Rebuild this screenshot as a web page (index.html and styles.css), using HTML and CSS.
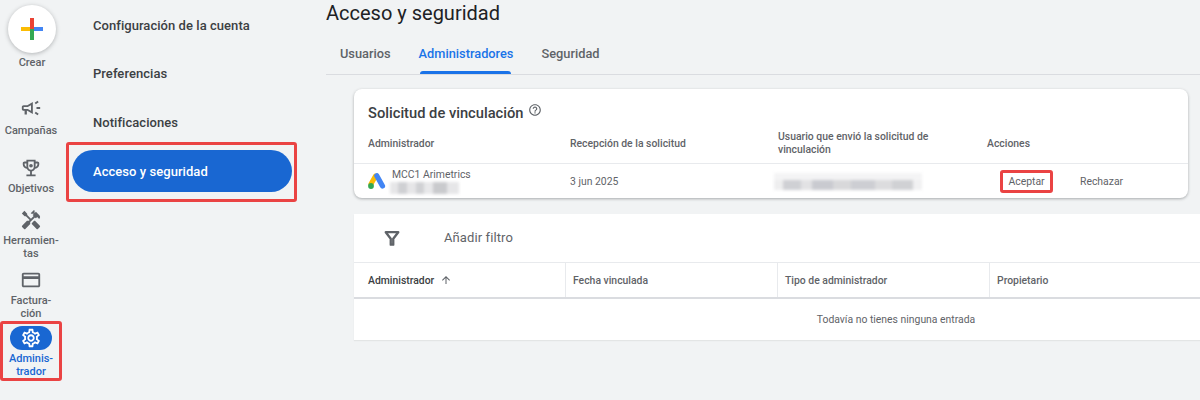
FILE: index.html
```html
<!DOCTYPE html>
<html lang="es">
<head>
<meta charset="utf-8">
<title>Acceso y seguridad</title>
<link rel="stylesheet" href="styles.css">
</head>
<body>
<div class="app">
  <nav class="rail">
    <div class="create">
      <div class="create-btn">
        <svg width="24" height="24" viewBox="0 0 24 24">
          <rect x="1" y="10" width="11" height="4" fill="#fbbc04"/>
          <rect x="12" y="10" width="11" height="4" fill="#4285f4"/>
          <rect x="10" y="1" width="4" height="11" fill="#ea4335"/>
          <rect x="10" y="12" width="4" height="11" fill="#34a853"/>
        </svg>
      </div>
      <span class="rail-label">Crear</span>
    </div>
    <div class="rail-item rail-campaigns">
      <svg class="rail-icon" width="22" height="22" viewBox="0 0 24 24" fill="#5f6368"><path fill-rule="evenodd" d="M18 11v2h4v-2h-4zm-2 6.610c.96.71 2.210 1.650 3.200 2.390.4-.53.8-1.070 1.200-1.600-.99-.74-2.240-1.680-3.200-2.400-.4.54-.8 1.080-1.200 1.610zM20.400 5.600c-.4-.53-.8-1.070-1.200-1.600-.99.74-2.240 1.680-3.200 2.400.4.53.8 1.070 1.200 1.600.96-.72 2.210-1.650 3.200-2.400zM4 9c-1.100 0-2 .9-2 2v2c0 1.100.9 2 2 2h1v4h2.500v-4H8l6 3.500V5.500L8 9H4zm0 2h4.500L12 9v6l-3.500-2H4v-2z"/></svg>
      <span class="rail-label">Campañas</span>
    </div>
    <div class="rail-item rail-goals">
      <svg class="rail-icon" width="22" height="22" viewBox="0 0 24 24" fill="#5f6368"><path d="M19 5h-2V3H7v2H5c-1.100 0-2 .9-2 2v1c0 2.550 1.920 4.630 4.390 4.940A5.010 5.010 0 0 0 11 15.900V19H7v2h10v-2h-4v-3.100a5.010 5.010 0 0 0 3.610-2.960C19.080 12.630 21 10.550 21 8V7c0-1.100-.9-2-2-2zM5 8V7h2v3.820C5.840 10.400 5 9.300 5 8zm12 2.820V7h2v1c0 1.300-.84 2.400-2 2.820zM15 11c0 1.650-1.350 3-3 3s-3-1.350-3-3V5h6v6z"/><circle cx="12" cy="9.500" r="2"/></svg>
      <span class="rail-label">Objetivos</span>
    </div>
    <div class="rail-item rail-tools">
      <svg class="rail-icon" width="22" height="22" viewBox="0 0 24 24" fill="#5f6368"><path d="m21.670 18.170-5.300-5.300h-.99l-2.540 2.540v.99l5.300 5.300c.39.39 1.020.39 1.410 0l2.120-2.120c.39-.38.39-1.020 0-1.410z"/><path d="m17.340 10.190 1.410-1.410 2.120 2.120a3 3 0 0 0 0-4.240l-3.540-3.540-1.410 1.410V1.710l-.7-.71-3.540 3.540.71.71h2.830l-1.410 1.410 1.060 1.060-2.890 2.890-4.130-4.130V5.060L4.830 2.040 2 4.870 5.030 7.900h1.410l4.130 4.130-.85.85H7.600l-5.300 5.300c-.39.39-.39 1.020 0 1.410l2.120 2.120c.39.39 1.020.39 1.410 0l5.300-5.300v-2.120l5.150-5.150 1.060 1.050z"/></svg>
      <span class="rail-label">Herramien-<br>tas</span>
    </div>
    <div class="rail-item rail-billing">
      <svg class="rail-icon" width="22" height="22" viewBox="0 0 24 24" fill="#5f6368"><path fill-rule="evenodd" d="M4 4h16c1.110 0 2 .89 2 2v12c0 1.110-.89 2-2 2H4c-1.110 0-2-.89-2-2V6c0-1.110.89-2 2-2zm0 2v2h16V6H4zm0 5v7h16v-7H4z"/></svg>
      <span class="rail-label">Factura-<br>ción</span>
    </div>
    <div class="rail-item rail-admin">
      <span class="admin-pill">
        <svg width="22" height="22" viewBox="0 0 24 24" fill="#fff"><path d="M19.430 12.980c.04-.32.07-.64.07-.98s-.03-.66-.07-.98l2.110-1.650c.19-.15.24-.42.12-.64l-2-3.460a.5.5 0 0 0-.61-.22l-2.490 1a7.300 7.300 0 0 0-1.690-.98l-.38-2.650A.49.49 0 0 0 14 2h-4c-.25 0-.46.18-.49.42l-.38 2.650c-.61.25-1.170.59-1.690.98l-2.490-1a.5.5 0 0 0-.61.22l-2 3.460c-.13.22-.07.49.12.64l2.110 1.650c-.04.32-.07.65-.07.98s.03.66.07.98l-2.110 1.650c-.19.15-.24.42-.12.64l2 3.460c.12.22.39.3.61.22l2.490-1c.52.4 1.080.73 1.690.98l.38 2.650c.03.24.24.42.49.42h4c.25 0 .46-.18.49-.42l.38-2.650c.61-.25 1.170-.59 1.690-.98l2.490 1c.23.09.49 0 .61-.22l2-3.460c.12-.22.07-.49-.12-.64l-2.110-1.650zm-1.980-1.710c.04.31.05.52.05.73s-.02.43-.05.73l-.14 1.130.89.7 1.080.84-.7 1.210-1.270-.51-1.040-.42-.9.68c-.43.32-.84.56-1.250.73l-1.060.43-.16 1.130-.2 1.350h-1.400l-.19-1.350-.16-1.130-1.060-.43c-.43-.18-.83-.41-1.230-.71l-.91-.7-1.060.43-1.270.51-.7-1.210 1.080-.84.89-.7-.14-1.130c-.03-.31-.05-.54-.05-.74s.02-.43.05-.73l.14-1.130-.89-.7-1.080-.84.7-1.210 1.270.51 1.040.42.9-.68c.43-.32.84-.56 1.250-.73l1.060-.43.16-1.130.2-1.350h1.390l.19 1.350.16 1.130 1.060.43c.43.18.83.41 1.230.71l.91.7 1.060-.43 1.270-.51.7 1.210-1.070.85-.89.7.14 1.130zM12 8c-2.210 0-4 1.790-4 4s1.790 4 4 4 4-1.790 4-4-1.790-4-4-4zm0 6c-1.100 0-2-.9-2-2s.9-2 2-2 2 .9 2 2-.9 2-2 2z"/></svg>
      </span>
      <span class="rail-label rail-label-active">Adminis-<br>trador</span>
    </div>
  </nav>

  <aside class="subnav">
    <div class="subnav-item">Configuración de la cuenta</div>
    <div class="subnav-item">Preferencias</div>
    <div class="subnav-item">Notificaciones</div>
    <div class="subnav-mark">
      <div class="subnav-active">Acceso y seguridad</div>
    </div>
  </aside>

  <main class="main">
    <h1 class="title">Acceso y seguridad</h1>
    <div class="tabs">
      <span class="tab">Usuarios</span>
      <span class="tab tab-active">Administradores</span>
      <span class="tab">Seguridad</span>
    </div>

    <section class="card request">
      <div class="request-title">
        <h2>Solicitud de vinculación</h2>
        <svg width="14" height="14" viewBox="0 0 24 24" fill="#5f6368"><path d="M11 18h2v-2h-2v2zm1-16C6.480 2 2 6.480 2 12s4.480 10 10 10 10-4.480 10-10S17.520 2 12 2zm0 18c-4.410 0-8-3.590-8-8s3.590-8 8-8 8 3.590 8 8-3.590 8-8 8zm0-14c-2.210 0-4 1.790-4 4h2c0-1.100.9-2 2-2s2 .9 2 2c0 2-3 1.750-3 5h2c0-2.250 3-2.500 3-5 0-2.210-1.790-4-4-4z"/></svg>
      </div>
      <div class="request-head">
        <span>Administrador</span>
        <span>Recepción de la solicitud</span>
        <span class="head-user">Usuario que envió la solicitud de vinculación</span>
        <span>Acciones</span>
      </div>
      <div class="request-row">
        <div class="account">
          <svg class="ads-logo" width="18" height="16" viewBox="0 0 18 16">
            <path d="M7.500 3 3 11" stroke="#fbbc04" stroke-width="5" stroke-linecap="round"/>
            <circle cx="3" cy="13" r="2.900" fill="#34a853"/>
            <path d="M8.800 2.700 14.500 13" stroke="#4285f4" stroke-width="5.200" stroke-linecap="round"/>
          </svg>
          <div class="account-text">
            <span>MCC1 Arimetrics</span>
            <span class="blur-id"></span>
          </div>
        </div>
        <span>3 jun 2025</span>
        <span class="blur-user"></span>
        <div class="actions">
          <span class="accept">Aceptar</span>
          <span class="reject">Rechazar</span>
        </div>
      </div>
    </section>

    <section class="card table">
      <div class="filter">
        <svg width="20" height="20" viewBox="0 0 24 24" fill="none" stroke="#5f6368" stroke-width="2.800" stroke-linejoin="round"><path d="M4.500 5h15L13.500 12.800V20h-3v-7.200z"/></svg>
        <span>Añadir filtro</span>
      </div>
      <div class="thead">
        <div class="th th-sort">Administrador
          <svg width="12" height="12" viewBox="0 0 24 24" fill="#5f6368"><path d="M4 12l1.410 1.410L11 7.830V20h2V7.830l5.580 5.590L20 12l-8-8z"/></svg>
        </div>
        <div class="th">Fecha vinculada</div>
        <div class="th">Tipo de administrador</div>
        <div class="th">Propietario</div>
        <div class="th"></div>
      </div>
      <div class="empty">Todavía no tienes ninguna entrada</div>
    </section>
  </main>
</div>
</body>
</html>
```
FILE: styles.css
```css
* { box-sizing: border-box; }
html, body { margin: 0; height: 400px; overflow: hidden; }
body {
  background: #f1f3f4;
  color: #3c4043;
  font-family: Roboto, "Liberation Sans", sans-serif;
}
.app { display: flex; height: 400px; }

/* rail */
.rail { width: 62px; flex: none; display: flex; flex-direction: column; align-items: center; }
.rail-label { font-size: 11px; font-weight: 500; line-height: 13px; color: #5f6368; text-align: center; white-space: nowrap; }
.create { display: flex; flex-direction: column; align-items: center; padding: 5px 0 0 2px; height: 97px; }
.create-btn { width: 48px; height: 48px; border-radius: 50%; background: #fff; box-shadow: 0 1px 4px rgba(60,64,67,.35); display: flex; align-items: center; justify-content: center; margin-bottom: 3px; }
.rail-item { display: flex; flex-direction: column; align-items: center; }
.rail-icon { margin-bottom: 3px; }
.rail-campaigns { height: 60px; }
.rail-campaigns .rail-icon { margin-bottom: 5px; }
.rail-goals { height: 52px; }
.rail-tools { height: 59.500px; }
.rail-billing { height: 52.500px; }
.rail-admin { width: 62px; height: 60px; border: 3px solid #ea4343; border-radius: 3px; padding-top: 2px; }
.admin-pill { width: 42px; height: 25px; border-radius: 12.500px; background: #1967d2; display: flex; align-items: center; justify-content: center; margin-bottom: 2px; }
.rail-label-active { color: #1967d2; }

/* sub navigation */
.subnav { width: 264px; flex: none; padding: 1px 0 0 4px; display: flex; flex-direction: column; }
.subnav-item { height: 48.500px; display: flex; align-items: center; padding-left: 27px; font-size: 13px; font-weight: 500; color: #3c4043; letter-spacing: .05px; white-space: nowrap; }
.subnav-mark { width: 231px; height: 60px; border: 3px solid #ea4343; border-radius: 3px; padding: 5px 2px 0 3px; margin-top: -4.500px; }
.subnav-active { height: 42px; border-radius: 21px; background: #1967d2; color: #fff; font-size: 13px; font-weight: 500; letter-spacing: .05px; display: flex; align-items: center; padding-left: 21px; }

/* main */
.main { flex: 1; min-width: 0; overflow: hidden; }
.title { margin: 0; font-size: 20px; font-weight: 400; line-height: 26px; color: #202124; }
.tabs { display: flex; height: 49px; border-bottom: 1px solid #dadce0; padding: 0 0 0 14px; gap: 28px; align-items: stretch; }
.tab { font-size: 12.800px; font-weight: 500; color: #5f6368; display: flex; align-items: center; padding-top: 6px; }
.tab-active { color: #1a73e8; position: relative; }
.tab-active::after { content: ""; position: absolute; left: 1px; right: 2px; bottom: 0; height: 3px; border-radius: 3px 3px 0 0; background: #1a73e8; }
.card { margin-left: 28px; background: #fff; }
.request { width: 834px; height: 109px; margin-top: 14px; border-radius: 8px; box-shadow: 0 1px 3px rgba(60,64,67,.4); }
.request-title { display: flex; align-items: center; gap: 4px; height: 41px; padding: 7px 0 0 14px; }
.request-title svg { margin-top: -6px; }
.request-title h2 { margin: 0; font-size: 14.700px; font-weight: 500; color: #3c4043; }
.request-head { display: grid; grid-template-columns: 202px 208px 209px 1fr; height: 34px; padding: 0 0 7px 14px; align-items: center; font-size: 10.400px; font-weight: 500; color: #5f6368; line-height: 13px; border-bottom: 1px solid #e8eaed; }
.head-user { width: 180px; }
.request-row { display: grid; grid-template-columns: 202px 204px 227px 1fr; height: 34px; padding-left: 14px; align-items: center; font-size: 10.400px; color: #5f6368; }
.account { display: flex; align-items: center; }
.ads-logo { flex: none; margin: 0 6px 0 0; }
.account-text { display: flex; flex-direction: column; line-height: 12px; color: #5f6368; }
.blur-id { display: block; width: 69px; height: 12px; margin: 1px 0 0 -2px; background: linear-gradient(90deg, #e6e6e8 0 12%, #cfd0d3 12% 25%, #e6e6e8 25% 37%, #d0d1d4 37% 50%, #e8e8ea 50% 62%, #c9cacd 62% 82%, #e6e6e8 82%); filter: blur(1.500px); }
.blur-user { display: block; width: 148px; height: 17px; background: linear-gradient(180deg, #f4f4f5 0 42%, transparent 42%), linear-gradient(90deg, #eeeeef 0 6%, #cfd0d4 6% 18%, #e2e2e4 18% 26%, #c9cad0 26% 40%, #d8d8da 40% 52%, #cdced3 52% 68%, #dcdcde 68% 80%, #d0d1d4 80% 94%, #f1f1f2 94%); filter: blur(1.500px); }
.actions { display: flex; align-items: center; gap: 27px; }
.accept { width: 53px; height: 23px; border: 3px solid #ea4343; border-radius: 3px; display: flex; align-items: center; justify-content: center; margin-left: -1px; }

.table { width: 1084px; margin-top: 16px; box-shadow: 0 1px 1px rgba(60,64,67,.08); }
.filter { height: 49px; display: flex; align-items: center; padding: 0 0 1px 28px; gap: 42px; font-size: 13px; color: #5f6368; border-bottom: 1px solid #e8eaed; letter-spacing: .1px; }
.thead { display: grid; grid-template-columns: repeat(5, 212px); height: 36px; border-bottom: 2px solid #dadce0; font-size: 10.400px; font-weight: 500; color: #5f6368; }
.th { display: flex; align-items: center; padding-left: 7px; border-right: 1px solid #e8eaed; }
.th-sort { padding-left: 14px; color: #3c4043; gap: 6px; }
.empty { height: 41px; display: flex; align-items: center; justify-content: center; font-size: 10.400px; color: #5f6368; }
```
